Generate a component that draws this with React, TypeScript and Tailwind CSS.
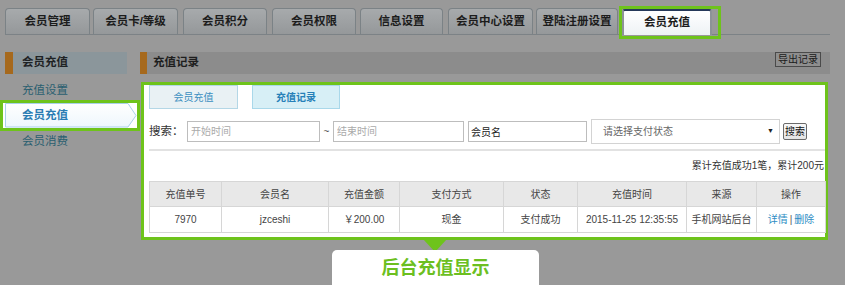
import React from "react";

const tabs = [
    { label: "会员管理", cls: "w-[85px]" },
    { label: "会员卡/等级", cls: "ml-[3px] w-[85px]" },
    { label: "会员积分", cls: "ml-[5px] w-[84px]" },
    { label: "会员权限", cls: "ml-[5px] w-[84px]" },
    { label: "信息设置", cls: "ml-[4px] w-[83px]" },
    { label: "会员中心设置", cls: "ml-[5px] w-[85px]" },
    { label: "登陆注册设置", cls: "ml-[3px] w-[82px]" },
];

const columns = [
    { title: "充值单号", width: "w-[72px]" },
    { title: "会员名", width: "w-[107px]" },
    { title: "充值金额", width: "w-[71px]" },
    { title: "支付方式", width: "w-[104px]" },
    { title: "状态", width: "w-[74px]" },
    { title: "充值时间", width: "w-[109px]" },
    { title: "来源", width: "w-[70px]" },
    { title: "操作", width: "w-[69px]" },
];

const row = ["7970", "jzceshi", "￥200.00", "现金", "支付成功", "2015-11-25 12:35:55", "手机网站后台"];

function TopTabs() {
    return (
        <div className="mx-[5px] mt-[8px] flex h-[27px] w-[825px] items-start border-b border-[#7c8286]">
            {tabs.map((t) => (
                <div
                    key={t.label}
                    className={`${t.cls} flex h-[26px] items-center justify-center rounded-t-[4px] border border-b-0 border-[#7b8286] bg-linear-to-b from-[#a7aaac] to-[#95989a] text-[11.5px] font-bold text-[#1c1c1c]`}
                >
                    {t.label}
                </div>
            ))}
            {/* highlighted active tab */}
            <div className="-mt-[2px] ml-[1px] h-[33px] w-[102px] border-[3px] border-[#6ec31b]">
                <div className="flex h-[26px] w-[90px] items-center justify-center rounded-t-[3px] border-x-2 border-t-2 border-x-[#8d9397] border-t-[#26395a] bg-linear-to-b from-white to-[#eef2f5] text-[11.5px] font-bold text-[#1c1c1c]">
                    会员充值
                </div>
            </div>
        </div>
    );
}

function Sidebar() {
    return (
        <div className="w-[140px] shrink-0">
            <div className="ml-[5px] flex h-[22px]">
                <div className="w-[8px] bg-[#a6691d]" />
                <div className="flex w-[114px] items-center bg-[#8b969b] pl-[9px] text-[11.5px] font-bold text-[#1e2224]">
                    会员充值
                </div>
            </div>
            <div className="mt-[5px] flex h-[24px] items-center pl-[22px] text-[11.5px] text-[#2a5f70]">充值设置</div>
            <div className="relative -mt-[3px] h-[31px] w-[140px] border-[3px] border-[#6ec31b] bg-white">
                <svg className="absolute inset-0" width="134" height="25" viewBox="0 0 134 25">
                    <defs>
                        <linearGradient id="navItem" x1="0" y1="0" x2="0" y2="1">
                            <stop offset="0" stopColor="#ffffff" />
                            <stop offset="1" stopColor="#eef7fd" />
                        </linearGradient>
                    </defs>
                    <polygon points="2.5,0.5 125,0.5 133,12.5 125,24 2.5,24" fill="url(#navItem)" stroke="#a9d1ea" />
                </svg>
                <div className="relative flex h-full items-center pl-[19px] text-[11.5px] font-bold text-[#2a7cb3]">会员充值</div>
            </div>
            <div className="flex h-[22px] items-center pl-[22px] text-[11.5px] text-[#2a5f70]">会员消费</div>
        </div>
    );
}

function Panel() {
    return (
        <div className="ml-[1px] mt-[8px] h-[158px] w-[687px] border-[3px] border-[#6ec31b] bg-white">
            <div className="flex h-[24px] pl-[5px] text-[10px]">
                <div className="flex w-[89px] items-center justify-center border border-[#b4d7e6] bg-[#e9f1f4] text-[#3b8fc0]">会员充值</div>
                <div className="ml-[14px] flex w-[88px] items-center justify-center border border-[#a9d8ea] bg-[#d7eff6] font-bold text-[#2680b8]">充值记录</div>
            </div>

            <div className="mt-[10px] flex h-[25px] items-center pl-[5px] text-[10px]">
                <span className="w-[38px] text-[11.5px] text-[#333]">搜索：</span>
                <input readOnly placeholder="开始时间" className="h-[21px] w-[133px] border border-[#bdbdbd] pl-[3px] text-[10px] outline-none placeholder:text-[#aaa]" />
                <span className="w-[13px] text-center text-[#555]">~</span>
                <input readOnly placeholder="结束时间" className="h-[21px] w-[131px] border border-[#bdbdbd] pl-[3px] text-[10px] outline-none placeholder:text-[#aaa]" />
                <input readOnly value="会员名" className="ml-[4px] h-[21px] w-[119px] border border-[#bdbdbd] pl-[2px] text-[10px] text-[#222] outline-none" />
                <div className="ml-[4px] flex h-[25px] w-[189px] items-center justify-between border border-[#d3d3d3] pl-[11px] pr-[5px] text-[#666]">
                    <span>请选择支付状态</span>
                    <span className="text-[7px] text-[#222]">▼</span>
                </div>
                <div className="ml-[3px] flex h-[17px] w-[24px] items-center justify-center rounded-[2px] border border-[#6b6b6b] bg-linear-to-b from-[#f8f8f8] to-[#e4e4e4] text-[10px] text-[#111]">
                    搜索
                </div>
            </div>

            <div className="ml-[5px] mt-[5px] h-[2px] bg-[#e2e2e2]" />

            <div className="mt-[8px] h-[14px] pr-[1px] text-right text-[10px] leading-[14px] text-[#333]">累计充值成功1笔，累计200元</div>

            <table className="ml-[5px] mt-[8px] w-[676px] table-fixed border-collapse text-[10px] text-[#444]">
                <colgroup>
                    {columns.map((c) => (
                        <col key={c.title} className={c.width} />
                    ))}
                </colgroup>
                <thead>
                    <tr className="h-[25px] bg-[#e8e8e8]">
                        {columns.map((c) => (
                            <th key={c.title} className="border border-[#d6d6d6] font-normal">{c.title}</th>
                        ))}
                    </tr>
                </thead>
                <tbody>
                    <tr className="h-[26px]">
                        {row.map((v, i) => (
                            <td key={i} className="border border-[#d6d6d6] text-center">{v}</td>
                        ))}
                        <td className="border border-[#d6d6d6] text-center">
                            <span className="text-[#2d8dc4]">详情</span>
                            <span className="mx-[2px] text-[#555]">|</span>
                            <span className="text-[#2d8dc4]">删除</span>
                        </td>
                    </tr>
                </tbody>
            </table>
        </div>
    );
}

export default function App() {
    return (
        <div
            className="relative h-[285px] w-[845px] overflow-hidden bg-[#999999]"
            style={{ fontFamily: '"Liberation Sans", "Noto Sans CJK SC", sans-serif' }}
        >
            <TopTabs />
            <div className="mt-[17px] flex">
                <Sidebar />
                <div className="w-[705px]">
                    <div className="flex h-[22px] w-[690px]">
                        <div className="w-[7px] bg-[#a6691d]" />
                        <div className="flex flex-1 items-start justify-between bg-[#8c8c8c] pl-[6px]">
                            <span className="self-center text-[11.5px] font-bold text-[#1e1e1e]">充值记录</span>
                            <div className="mr-[9px] flex h-[15px] items-center border border-[#4a4a4a] bg-[#8e8e8e] px-[2px] text-[10px] text-[#1a1a1a]">
                                导出记录
                            </div>
                        </div>
                    </div>
                    <Panel />
                </div>
            </div>

            {/* annotation callout */}
            <div className="absolute left-[423px] top-[239px] h-0 w-0 border-x-[12px] border-t-[13px] border-x-transparent border-t-[#6ec31b]" />
            <div className="absolute left-[332px] top-[250px] h-[40px] w-[207px] rounded-[5px] bg-white">
                <div className="flex h-[36px] items-center justify-center text-[18px] font-bold text-[#6cbf1f]">后台充值显示</div>
            </div>
        </div>
    );
}
